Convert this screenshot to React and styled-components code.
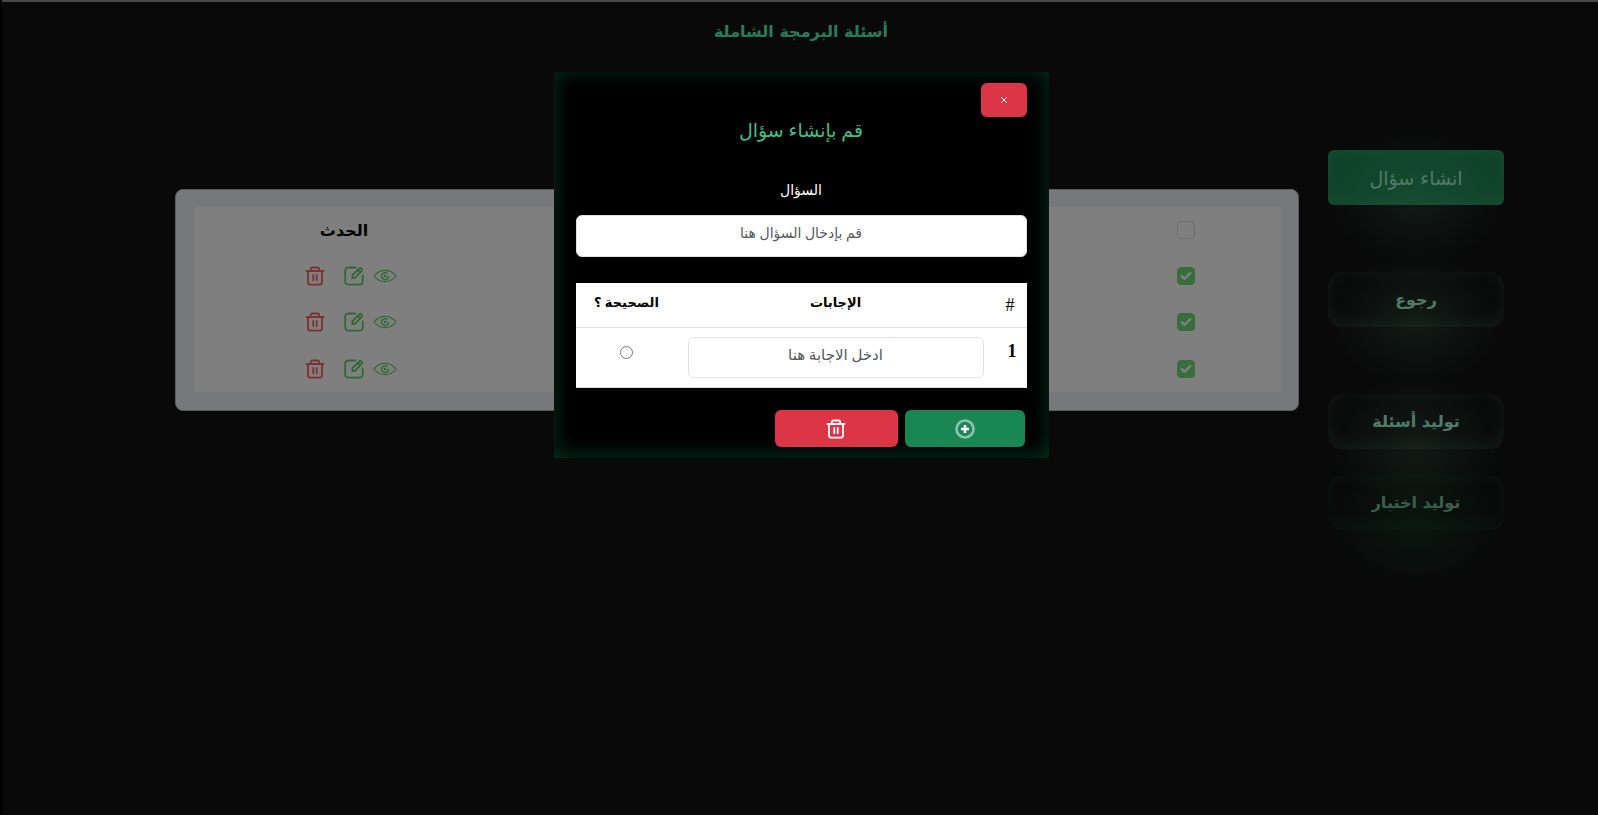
import React, { useState } from "react";
import styled, { createGlobalStyle } from "styled-components";

const GlobalStyle = createGlobalStyle`
  *, *::before, *::after { box-sizing: border-box; }
  html { background: #000; }
  body {
    margin: 0;
    background: #000;
    font-family: "DejaVu Sans", sans-serif;
  }
  button, input { font: inherit; }
  svg { display: block; }
`;

const Page = styled.div`
  min-height: 100vh;
  margin-left: 2px;
  padding-left: 2px;
  border-top: 2px solid #484848;
  background: #121212;
  display: flex;
  flex-direction: column;
`;

const Header = styled.header`
  padding: 16px 0;
  text-align: center;
`;

const PageTitle = styled.h1`
  margin: 0;
  font-size: 16px;
  line-height: 28px;
  font-weight: 700;
  color: #4cf8b4;
`;

const Content = styled.div`
  display: flex;
  align-items: flex-start;
  gap: 29px;
  padding: 88px 94px 0 171px;
`;

const Sidebar = styled.nav`
  width: 176px;
  flex: none;
  display: flex;
  flex-direction: column;
  gap: 26px;
`;

const SideGroup = styled.div`
  display: flex;
  flex-direction: column;
  gap: 67px;
`;

const SideButton = styled.button`
  position: relative;
  height: 55px;
  border: 0;
  border-radius: ${(p) => (p.$primary ? 6 : 14)}px;
  padding: 0;
  font-size: ${(p) => (p.$primary ? 19 : 16)}px;
  font-weight: ${(p) => (p.$primary ? 400 : 700)};
  color: ${(p) => (p.$dim ? "#8ac4a6" : "#a8f8d4")};
  background: ${(p) => (p.$primary ? "#1f8650" : "transparent")};
  box-shadow: inset 0 -2px 16px ${(p) => (p.$dim ? "rgba(24,120,80,.25)" : "rgba(120,220,180,.18)")};

  &::after {
    content: "";
    position: absolute;
    inset: -20px 0 -60px;
    pointer-events: none;
    background: radial-gradient(
      closest-side,
      ${(p) => (p.$dim ? "rgba(20,130,80,.25)" : "rgba(110,220,170,.18)")},
      transparent
    );
  }
`;

const Panel = styled.main`
  flex: 1;
  min-width: 0;
  margin-top: 39px;
  padding: 17px 17px 18px 18px;
  border: 1px solid #b8b8bc;
  border-radius: 8px;
  background: #eef0f6;
`;

const QuestionTable = styled.table`
  width: 100%;
  table-layout: fixed;
  border-collapse: collapse;
  background: #fff;

  th, td {
    height: 46px;
    padding: 0;
    text-align: center;
    vertical-align: middle;
    font-size: 16px;
    color: #000;
  }
  tbody tr:last-child td { height: 47px; }
`;

const SelectCol = styled.col`
  width: 190px;
`;

const ActionCol = styled.col`
  width: 300px;
`;

const Actions = styled.div`
  display: flex;
  justify-content: center;
  align-items: center;
  padding-left: 14px;
`;

const IconButton = styled.button`
  border: 0;
  padding: 0;
  background: none;
  color: ${(p) => (p.$danger ? "#f46464" : "#5fd06a")};
  margin-left: ${(p) => p.$gap || 0}px;
`;

const CheckLabel = styled.label`
  display: grid;
  width: 18px;
  margin: 0 auto;

  input, svg { grid-area: 1 / 1; }
  svg { pointer-events: none; place-self: center; }
`;

const CheckInput = styled.input`
  appearance: none;
  width: 18px;
  height: 18px;
  margin: 0;
  border: 1px solid #dcdcdc;
  border-radius: 4px;

  &:checked {
    background: #6fdc76;
    border-color: #6fdc76;
  }
`;

const Overlay = styled.div`
  position: fixed;
  inset: 2px 0 0 2px;
  padding: 70px 0 0 2px;
  background: rgba(0, 0, 0, 0.5);
`;

const Dialog = styled.section`
  width: 495px;
  margin: 0 auto;
  padding: 11px 22px;
  border-radius: 2px;
  background: #000;
  box-shadow: inset 0 -2px 20px #003420;
  font-family: "Liberation Serif", "DejaVu Sans", serif;
`;

const SolidButton = styled.button`
  display: grid;
  place-items: center;
  border: 0;
  border-radius: 6px;
  padding: 0;
  color: #fff;
  background: ${(p) => (p.$danger ? "#dc3545" : "#198754")};
  width: ${(p) => p.$width}px;
  height: ${(p) => p.$height}px;
`;

const DialogTitle = styled.h2`
  margin: 0 0 32px;
  text-align: center;
  font-size: 19px;
  line-height: 28px;
  font-weight: 400;
  color: #3fc08a;
`;

const Field = styled.label`
  display: flex;
  flex-direction: column;
  gap: 10px;
  margin-bottom: 26px;
  text-align: center;
  font-size: 14px;
  line-height: 28px;
  color: #fff;
`;

const TextInput = styled.input`
  width: 100%;
  height: ${(p) => p.$height}px;
  padding: 0 12px 4px;
  border: 1px solid #dee2e6;
  border-radius: 6px;
  background: #fff;
  color: #212529;
  text-align: center;

  &::placeholder { color: #54585c; opacity: 1; }
`;

const AnswerTable = styled.table`
  width: 100%;
  table-layout: fixed;
  border-collapse: collapse;
  background: #fff;
  color: #000;
  font-size: 15px;

  th, td {
    padding: 9px 10px;
    border-bottom: 1px solid #dee2e6;
    text-align: center;
    vertical-align: top;
    line-height: 24px;
  }
  thead th { height: 44px; padding: 8px 0; font-size: 13px; }
  thead th:first-child { font-weight: 400; font-size: 18px; line-height: 28px; }
  tbody th { text-align: right; line-height: 28px; font-size: 18px; }
`;

const NumberCol = styled.col`
  width: 33px;
`;

const CorrectCol = styled.col`
  width: 102px;
`;

const Radio = styled.input`
  width: 13px;
  height: 13px;
  margin: 9px 0 0;
`;

const Footer = styled.footer`
  display: flex;
  gap: 7px;
  margin-top: 22px;
  padding-right: 2px;
`;

function TrashIcon({ size = 20 }) {
  return (
    <svg width={size} height={size} viewBox="0 0 20 20" fill="none" stroke="currentColor" strokeWidth="1.8" strokeLinecap="round" strokeLinejoin="round">
      <path d="M1.5 5h17M5.8 5V3.2q0-1.7 1.7-1.7h5q1.7 0 1.7 1.7V5M3 5v11.2q0 2.5 2.5 2.5h9q2.5 0 2.5-2.5V5M8.3 9v5.3M11.7 9v5.3" />
    </svg>
  );
}

function EditIcon() {
  return (
    <svg width="20" height="20" viewBox="0 0 20 20" fill="none" stroke="currentColor" strokeWidth="1.8" strokeLinecap="round" strokeLinejoin="round">
      <path d="M11.5 1.5H5Q1.2 1.5 1.2 5v10.2q0 3.5 3.6 3.5h10.4q3.5 0 3.5-3.5V9.3" />
      <path d="M8.3 12.2l.3-3.2 6.4-6.4q1.2-1.1 2.4 0t0 2.5L11.2 11.6zM13.8 4l2.2 2.2" />
    </svg>
  );
}

function EyeIcon() {
  return (
    <svg width="24" height="20" viewBox="0 0 24 20" fill="none" stroke="currentColor" strokeWidth="1.2">
      <path d="M1 10Q5.500 4.300 12 4.300T23 10Q18.500 15.700 12 15.700T1 10z" />
      <path d="M14.500 7.700A3.500 3.500 0 1 0 15.500 10" strokeWidth="1.400" />
      <circle cx="12" cy="10" r="1.300" fill="currentColor" stroke="none" />
    </svg>
  );
}

function CheckMark() {
  return (
    <svg width="12" height="10" viewBox="0 0 12 10" fill="none" stroke="#fff" strokeWidth="2.400" strokeLinecap="round" strokeLinejoin="round">
      <path d="M1.800 5.200l2.700 2.700L10.200 2.200" />
    </svg>
  );
}

function AddIcon() {
  return (
    <svg width="20" height="20" viewBox="0 0 20 20" fill="none" stroke="#fff">
      <circle cx="10" cy="10" r="8.500" strokeWidth="2.600" opacity="0.5" />
      <path d="M10 6v8M6 10h8" strokeWidth="2.600" />
    </svg>
  );
}

function CloseIcon() {
  return (
    <svg width="8" height="8" viewBox="0 0 8 8" stroke="#fff" strokeWidth="1">
      <path d="M1 1l6 6M7 1l-6 6" />
    </svg>
  );
}

function Check({ label, initial }) {
  const [checked, setChecked] = useState(initial);
  return (
    <CheckLabel>
      <CheckInput type="checkbox" aria-label={label} checked={checked} onChange={() => setChecked(!checked)} />
      {checked && <CheckMark />}
    </CheckLabel>
  );
}

export default function App() {
  return (
    <>
      <GlobalStyle />
      <Page dir="rtl" lang="ar">
        <Header>
          <PageTitle>أسئلة البرمجة الشاملة</PageTitle>
        </Header>
        <Content>
          <Sidebar>
            <SideGroup>
              <SideButton $primary>انشاء سؤال</SideButton>
              <SideButton>رجوع</SideButton>
              <SideButton>توليد أسئلة</SideButton>
            </SideGroup>
            <SideButton $dim>توليد اختبار</SideButton>
          </Sidebar>
          <Panel>
            <QuestionTable>
              <colgroup>
                <SelectCol />
                <col />
                <ActionCol />
              </colgroup>
              <thead>
                <tr>
                  <th><Check label="تحديد الكل" initial={false} /></th>
                  <th />
                  <th>الحدث</th>
                </tr>
              </thead>
              <tbody>
                {[1, 2, 3].map((n) => (
                  <tr key={n}>
                    <td><Check label={`تحديد ${n}`} initial /></td>
                    <td />
                    <td>
                      <Actions>
                        <IconButton aria-label="عرض" $gap={9}><EyeIcon /></IconButton>
                        <IconButton aria-label="تعديل" $gap={19}><EditIcon /></IconButton>
                        <IconButton aria-label="حذف" $danger><TrashIcon /></IconButton>
                      </Actions>
                    </td>
                  </tr>
                ))}
              </tbody>
            </QuestionTable>
          </Panel>
        </Content>
      </Page>
      <Overlay dir="rtl" lang="ar">
        <Dialog role="dialog" aria-modal="true" aria-labelledby="dialog-title">
          <SolidButton $danger $width={46} $height={34} aria-label="إغلاق"><CloseIcon /></SolidButton>
          <DialogTitle id="dialog-title">قم بإنشاء سؤال</DialogTitle>
          <Field>
            السؤال
            <TextInput type="text" $height={42} placeholder="قم بإدخال السؤال هنا" />
          </Field>
          <AnswerTable>
            <colgroup>
              <NumberCol />
              <col />
              <CorrectCol />
            </colgroup>
            <thead>
              <tr>
                <th>#</th>
                <th>الإجابات</th>
                <th>الصحيحة ؟</th>
              </tr>
            </thead>
            <tbody>
              <tr>
                <th scope="row">1</th>
                <td><TextInput type="text" $height={41} aria-label="الإجابة 1" placeholder="ادخل الاجابة هنا" /></td>
                <td><Radio type="radio" name="correct" aria-label="الإجابة 1 صحيحة" /></td>
              </tr>
            </tbody>
          </AnswerTable>
          <Footer>
            <SolidButton $width={120} $height={37} aria-label="إضافة"><AddIcon /></SolidButton>
            <SolidButton $danger $width={123} $height={37} aria-label="حذف"><TrashIcon /></SolidButton>
          </Footer>
        </Dialog>
      </Overlay>
    </>
  );
}
